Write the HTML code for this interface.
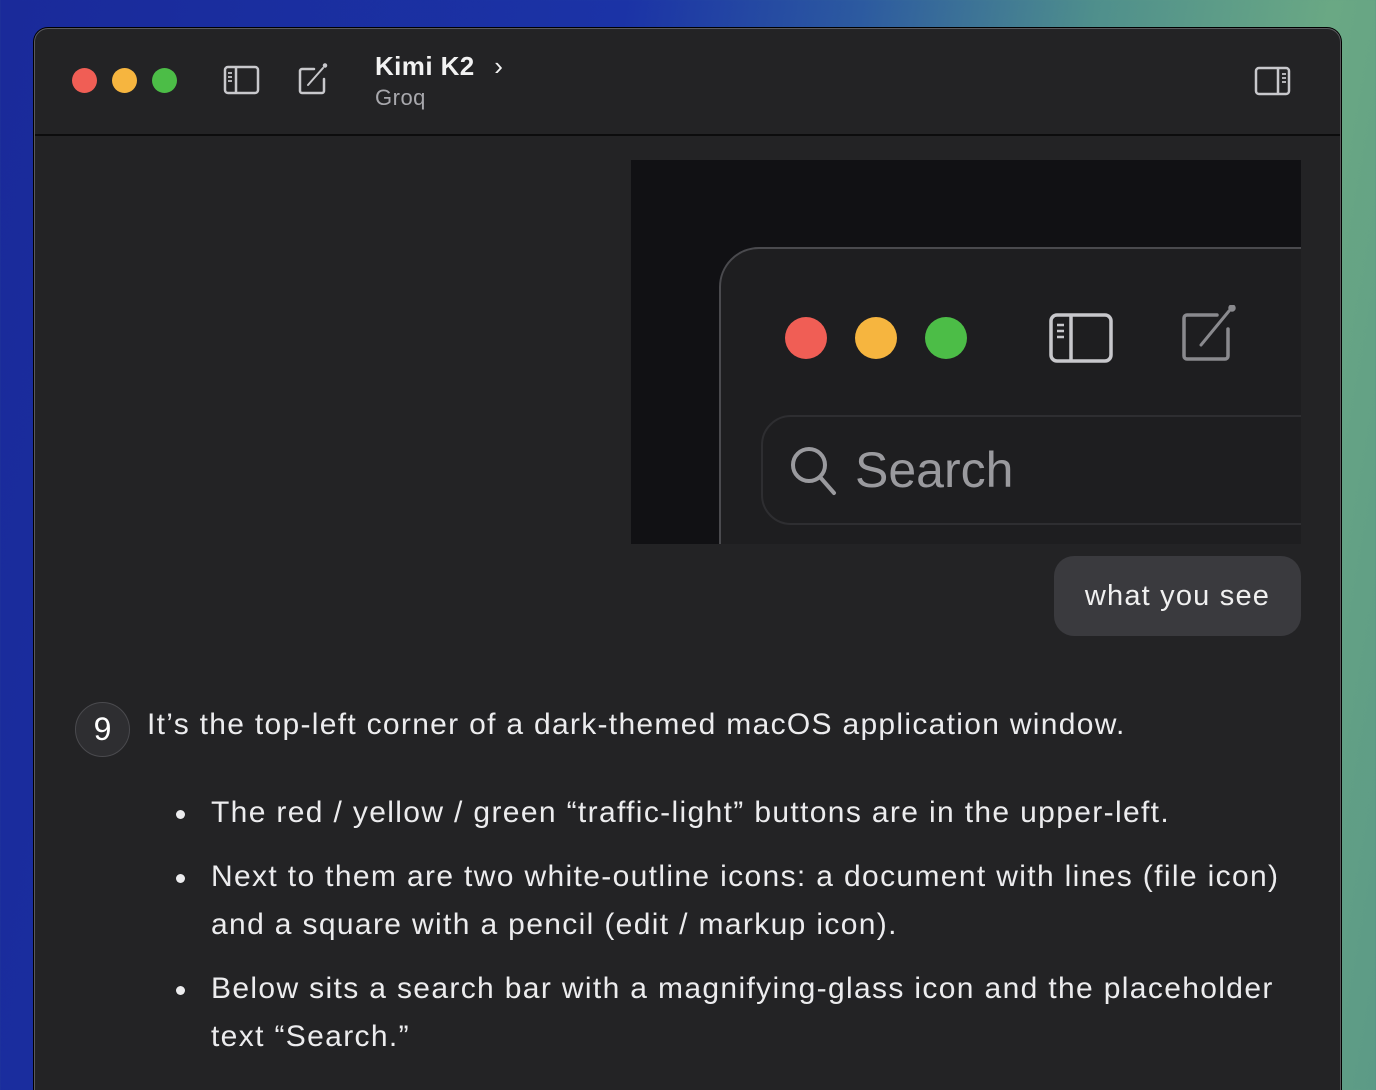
<!DOCTYPE html>
<html><head><meta charset="utf-8"><style>
*{margin:0;padding:0;box-sizing:border-box}
html,body{width:1376px;height:1090px;overflow:hidden}
body{position:relative;font-family:"Liberation Sans",sans-serif;
background:linear-gradient(100deg,#1a2a9a 0%,#1b33a6 40%,#2c5aa0 55%,#4f8f8c 70%,#6aa884 85%,#5c9a86 100%)}
.win{position:absolute;left:34px;top:28px;width:1307px;height:1100px;background:#232325;border:1px solid #5a5a5e;border-radius:14px;box-shadow:0 0 0 1px #000;overflow:hidden}
.tb{position:absolute;left:0;top:0;right:0;height:107px;border-bottom:2px solid #0c0c0d}
.dot{position:absolute;width:25px;height:25px;border-radius:50%;top:39px}
.t1{position:absolute;left:340px;top:22px;color:#f2f2f2;font-size:26px;font-weight:bold;letter-spacing:0.4px}
.t2{position:absolute;left:340px;top:56px;color:#a8a8ad;font-size:22px;letter-spacing:0.5px}
.img{position:absolute;left:596px;top:131px;width:670px;height:384px;background:#111114;overflow:hidden}
.iw{position:absolute;left:88px;top:87px;width:700px;height:400px;background:#1e1e20;border:2px solid #4a4a4e;border-radius:40px}
.idot{position:absolute;width:42px;height:42px;border-radius:50%;top:68px}
.sb{position:absolute;left:40px;top:166px;width:700px;height:110px;border:2px solid #2e2e31;border-radius:30px}
.bub{position:absolute;left:1019px;top:527px;width:247px;height:80px;background:#3a3a3e;border-radius:20px;color:#f0f0f0;font-size:29px;line-height:80px;text-align:center;letter-spacing:1.2px}
.av{position:absolute;left:40px;top:673px;width:55px;height:55px;border-radius:50%;background:#2e2e31;border:1px solid #4a4a4e;color:#fff;font-size:32px;text-align:center;line-height:52px}
.p{position:absolute;color:#ececee;font-size:30px;line-height:48px;letter-spacing:1.3px;white-space:nowrap}
ul{position:absolute;width:1085px;color:#ececee;font-size:30px;line-height:48px;list-style:none;letter-spacing:1.35px}
li{position:relative;margin-bottom:16px}
li:before{content:"";position:absolute;left:-35px;top:21px;width:9px;height:9px;border-radius:50%;background:#ececee}
</style></head><body>
<div class="win">
<div class="tb">
<div class="dot" style="left:37px;background:#f05e55"></div>
<div class="dot" style="left:77px;background:#f6b53f"></div>
<div class="dot" style="left:117px;background:#4cbd47"></div>
<svg style="position:absolute;left:188px;top:36px" width="38" height="30" viewBox="0 0 38 30" fill="none" stroke="#c8c8cc" stroke-width="2.5"><rect x="2" y="2" width="33" height="26" rx="3"/><line x1="13" y1="2" x2="13" y2="28"/><path d="M5 8h4M5 12h4M5 16h4" stroke-width="1.8"/></svg>
<svg style="position:absolute;left:262px;top:34px" width="32" height="32" viewBox="0 0 32 32" fill="none" stroke="#c8c8cc" stroke-width="2.5" stroke-linecap="round"><path d="M17 6H5a2 2 0 0 0-2 2v20a2 2 0 0 0 2 2h20a2 2 0 0 0 2-2V16"/><path d="M11 22l15-17" stroke-width="2"/><circle cx="28" cy="2.5" r="1" fill="#c8c8cc"/></svg>
<div class="t1">Kimi K2 <span style="font-weight:normal;margin-left:12px">&#x203A;</span></div>
<div class="t2">Groq</div>
<svg style="position:absolute;left:1219px;top:37px" width="38" height="30" viewBox="0 0 38 30" fill="none" stroke="#c8c8cc" stroke-width="2.5"><rect x="2" y="2" width="33" height="26" rx="3"/><line x1="24" y1="2" x2="24" y2="28"/><path d="M28 8h4M28 12h4M28 16h4" stroke-width="1.8"/></svg>
</div>
<div class="img">
<div class="iw">
<div class="idot" style="left:64px;background:#f05e55"></div>
<div class="idot" style="left:134px;background:#f6b53f"></div>
<div class="idot" style="left:204px;background:#4cbd47"></div>
<svg style="position:absolute;left:328px;top:64px" width="64" height="50" viewBox="0 0 64 50" fill="none" stroke="#c8c8cc" stroke-width="3.5"><rect x="2" y="2" width="60" height="46" rx="6"/><line x1="22" y1="2" x2="22" y2="48"/><path d="M8 12h7M8 18h7M8 24h7" stroke-width="2.5"/></svg>
<svg style="position:absolute;left:460px;top:56px" width="56" height="56" viewBox="0 0 56 56" fill="none" stroke="#8a8a8e" stroke-width="3.5" stroke-linecap="round"><path d="M36 10H6a3 3 0 0 0-3 3v38a3 3 0 0 0 3 3h38a3 3 0 0 0 3-3V24"/><path d="M20 40l28-34" stroke-width="3"/><circle cx="51" cy="3" r="2" fill="#8a8a8e"/></svg>
<div class="sb">
<svg style="position:absolute;left:26px;top:28px" width="50" height="52" viewBox="0 0 50 52" fill="none" stroke="#9a9a9e" stroke-width="4" stroke-linecap="round"><circle cx="20" cy="20" r="16"/><line x1="31" y1="32" x2="45" y2="48"/></svg>
<div style="position:absolute;left:92px;top:24px;color:#9a9a9e;font-size:50px">Search</div>
</div>
</div>
</div>
<div class="bub">what you see</div>
<div class="av">9</div>
<div class="p" style="left:112px;top:672px">It’s the top-left corner of a dark-themed macOS application window.</div>
<ul style="left:176px;top:760px">
<li>The red / yellow / green “traffic-light” buttons are in the upper-left.</li>
<li>Next to them are two white-outline icons: a document with lines (file icon) and a square with a pencil (edit / markup icon).</li>
<li>Below sits a search bar with a magnifying-glass icon and the placeholder text “Search.”</li>
</ul>
</div>
</body></html>
